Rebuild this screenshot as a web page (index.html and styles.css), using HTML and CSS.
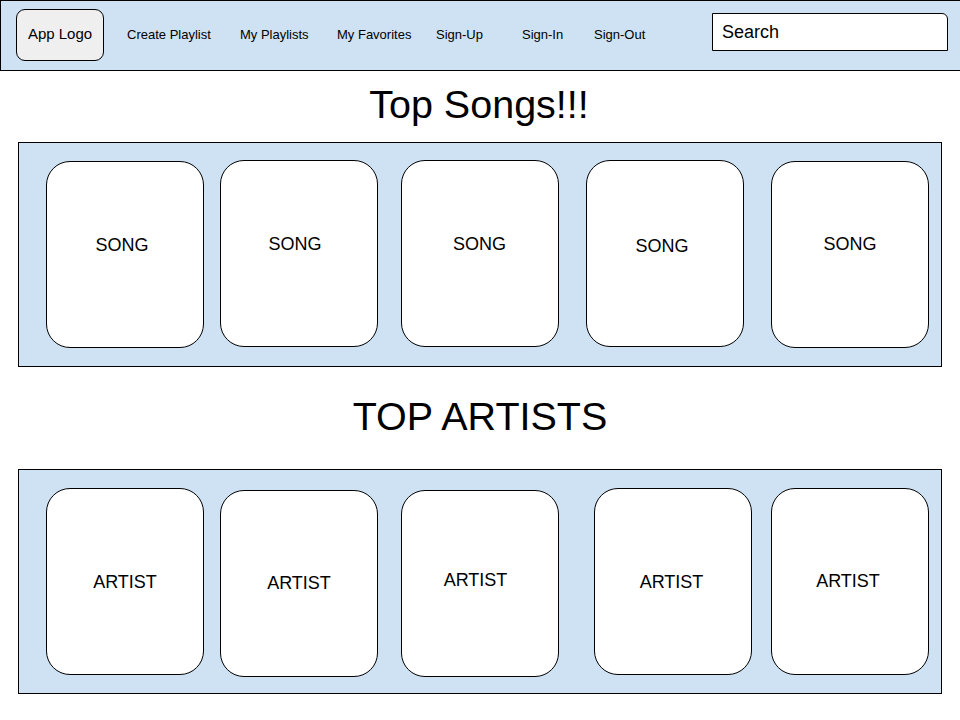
FILE: index.html
```html
<!DOCTYPE html>
<html lang="en">
<head>
<meta charset="utf-8">
<title>Top Songs</title>
<link rel="stylesheet" href="styles.css">
</head>
<body>
<header class="topbar">
  <div class="logo">App Logo</div>
  <nav class="nav">
    <a class="nav-link nav-create">Create Playlist</a>
    <a class="nav-link nav-playlists">My Playlists</a>
    <a class="nav-link nav-favorites">My Favorites</a>
    <a class="nav-link nav-signup">Sign-Up</a>
    <a class="nav-link nav-signin">Sign-In</a>
    <a class="nav-link nav-signout">Sign-Out</a>
  </nav>
  <div class="search">Search</div>
</header>
<main class="content">
  <h1 class="section-title title-songs">Top Songs!!!</h1>
  <section class="panel panel-songs">
    <div class="card"><span class="card-label">SONG</span></div>
    <div class="card"><span class="card-label">SONG</span></div>
    <div class="card"><span class="card-label">SONG</span></div>
    <div class="card"><span class="card-label">SONG</span></div>
    <div class="card"><span class="card-label">SONG</span></div>
  </section>
  <h1 class="section-title title-artists">TOP ARTISTS</h1>
  <section class="panel panel-artists">
    <div class="card"><span class="card-label">ARTIST</span></div>
    <div class="card"><span class="card-label">ARTIST</span></div>
    <div class="card"><span class="card-label">ARTIST</span></div>
    <div class="card"><span class="card-label">ARTIST</span></div>
    <div class="card"><span class="card-label">ARTIST</span></div>
  </section>
</main>
</body>
</html>
```
FILE: styles.css
```css
* { box-sizing: border-box; }

html, body {
  margin: 0;
  padding: 0;
  background: #ffffff;
}

body {
  font-family: "Liberation Sans", Arial, sans-serif;
  color: #000000;
  width: 960px;
  height: 720px;
  overflow: hidden;
}

.topbar {
  display: flex;
  align-items: center;
  height: 71px;
  width: 960px;
  background: #cfe2f3;
  border: 1px solid #000000;
  border-right: none;
  padding-left: 15px;
  padding-bottom: 2px;
}

.logo {
  width: 88px;
  height: 52px;
  flex: none;
  display: flex;
  align-items: center;
  justify-content: center;
  background: #efefef;
  border: 1px solid #000000;
  border-radius: 9px;
  font-size: 15px;
  margin-right: 23px;
  padding-bottom: 2px;
}

.nav {
  display: flex;
  align-items: center;
}

.nav-link {
  font-size: 13px;
  color: #000000;
  text-decoration: none;
  white-space: nowrap;
  flex: none;
}

.nav-create { width: 113px; }
.nav-playlists { width: 97px; }
.nav-favorites { width: 99px; }
.nav-signup { width: 86px; }
.nav-signin { width: 72px; }
.nav-signout { width: 118px; }

.search {
  width: 236px;
  height: 38px;
  flex: none;
  display: flex;
  align-items: center;
  padding-left: 9px;
  background: #ffffff;
  border: 1px solid #000000;
  border-radius: 0 6px 0 0;
  font-size: 18px;
  align-self: flex-start;
  margin-top: 12px;
}

.content {
  display: flex;
  flex-direction: column;
}

.section-title {
  margin: 0;
  font-weight: normal;
  font-size: 39.5px;
  line-height: 45px;
  text-align: center;
}

.title-songs {
  margin-top: 11px;
  margin-bottom: 15px;
  padding-right: 2px;
}

.title-artists {
  margin-top: 27px;
  margin-bottom: 30px;
}

.panel {
  margin-left: 18px;
  width: 924px;
  height: 225px;
  background: #cfe2f3;
  border: 1px solid #000000;
  display: flex;
  align-items: flex-start;
  padding-left: 27px;
  padding-top: 17px;
}

.card {
  width: 158px;
  height: 187px;
  flex: none;
  background: #ffffff;
  border: 1px solid #000000;
  border-radius: 24px;
  display: flex;
  align-items: center;
  justify-content: center;
  font-size: 18px;
}

.panel-songs .card { padding-bottom: 19px; padding-right: 6px; }
.panel-songs .card:nth-child(1) { margin-top: 1px; }
.panel-songs .card:nth-child(2) { margin-left: 16px; padding-right: 8px; }
.panel-songs .card:nth-child(3) { margin-left: 23px; padding-right: 1px; }
.panel-songs .card:nth-child(4) { margin-left: 27px; padding-bottom: 15px; padding-right: 6px; }
.panel-songs .card:nth-child(5) { margin-left: 27px; margin-top: 1px; padding-bottom: 21px; padding-right: 0; }

.panel-artists .card { padding-top: 1px; }
.panel-artists .card:nth-child(1) { margin-top: 1px; }
.panel-artists .card:nth-child(2) { margin-left: 16px; margin-top: 3px; padding-bottom: 2px; }
.panel-artists .card:nth-child(3) { margin-left: 23px; margin-top: 3px; padding-top: 0; padding-bottom: 6px; padding-right: 9px; }
.panel-artists .card:nth-child(4) { margin-left: 35px; margin-top: 1px; padding-top: 2px; padding-right: 3px; }
.panel-artists .card:nth-child(5) { margin-left: 19px; margin-top: 1px; padding-bottom: 1px; padding-right: 4px; }

.card-label {
  white-space: nowrap;
}
```
